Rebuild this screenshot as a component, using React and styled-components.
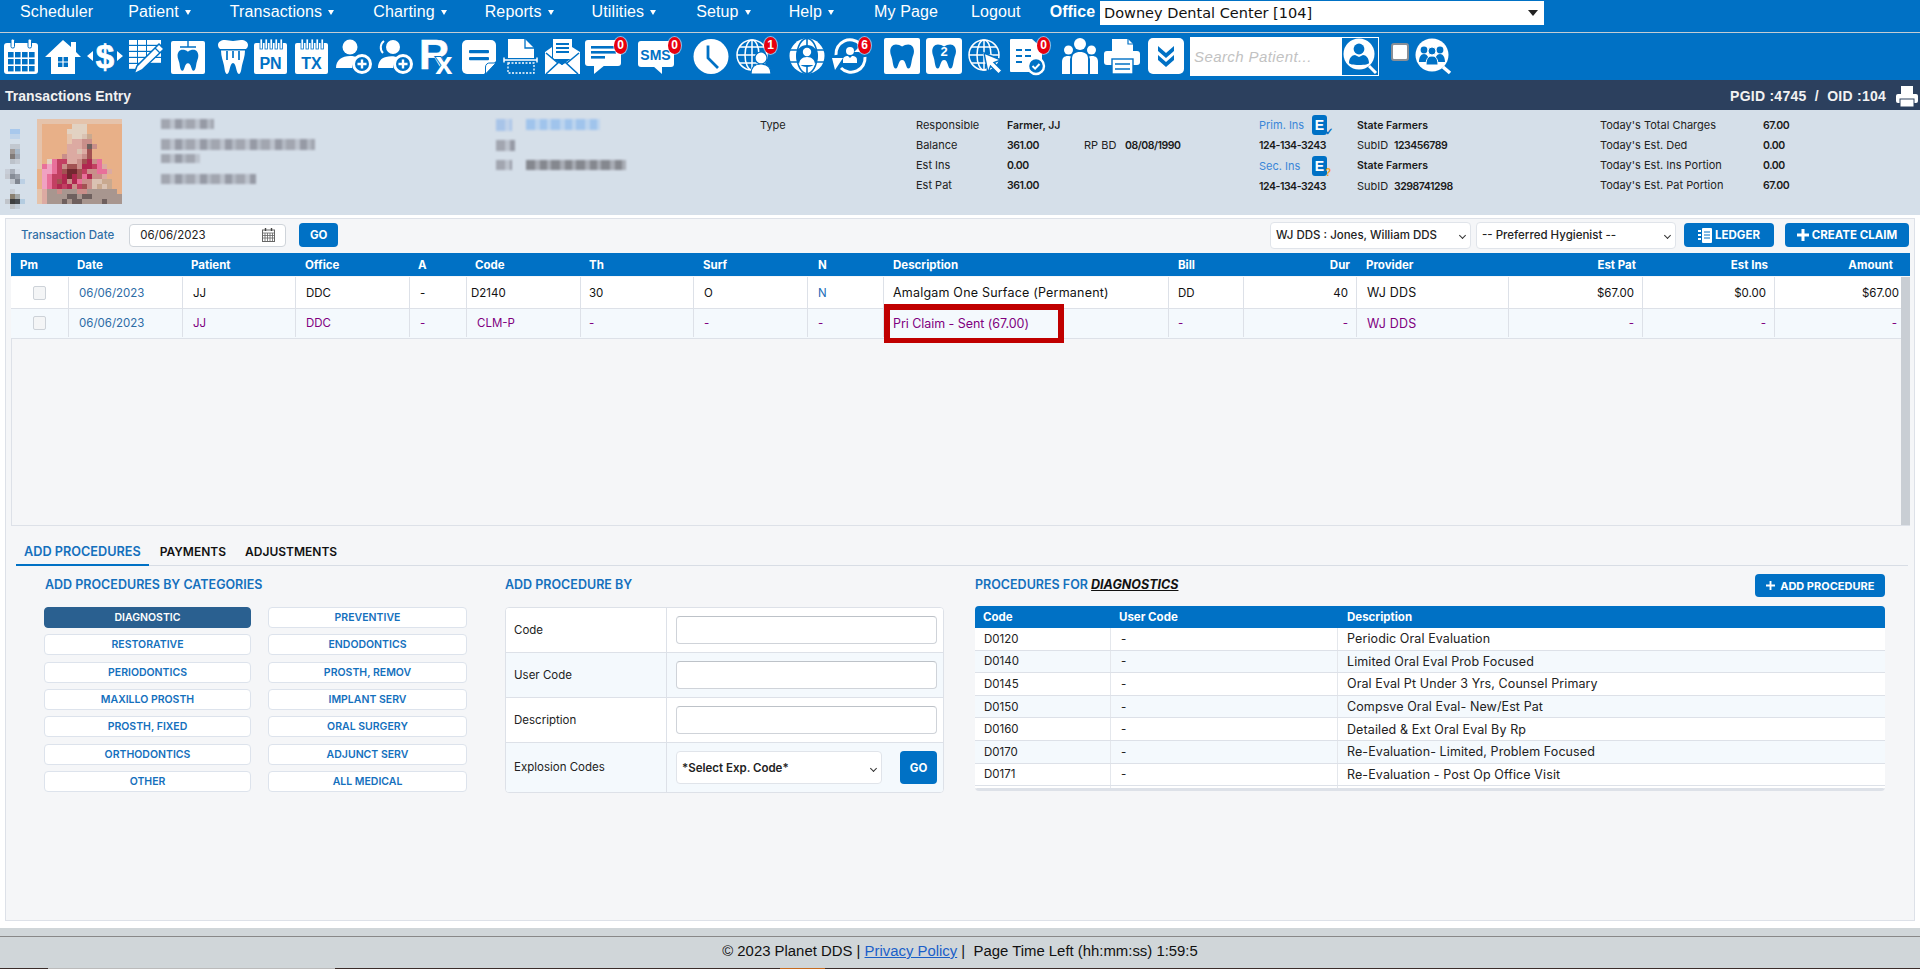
import React from 'react';
import styled, { createGlobalStyle } from 'styled-components';

const BLUE = '#0071c5';
const BODY = '"Inter", "Noto Sans", sans-serif';
const ARIAL = '"Liberation Sans", Arial, sans-serif';

const Global = createGlobalStyle`
  html, body { margin: 0; padding: 0; background: #fff; }
  body { font-family: ${BODY}; font-size: 12px; color: #111; overflow: hidden; }
  * { box-sizing: border-box; }
`;

const Page = styled.div`
  width: 1920px; height: 969px; display: flex; flex-direction: column; overflow: hidden;
`;
const TopNav = styled.nav`
  height: 33px; background: ${BLUE}; border-bottom: 1px solid #c4ccd4; display: flex; align-items: flex-start;
  padding-left: 20px; font-family: ${ARIAL}; font-size: 16px; color: #fff;
`;
const NavItem = styled.div`
  display: flex; align-items: center; height: 24px; margin-right: ${p => p.$mr}px; white-space: nowrap; letter-spacing: .12px;
`;
const Caret = styled.span`
  display: inline-block; margin-left: 6px; width: 0; height: 0; margin-top: 1px;
  border-left: 3.5px solid transparent; border-right: 3.5px solid transparent; border-top: 5px solid #fff;
`;
const OfficeLabel = styled.div`
  font-weight: 700; height: 24px; display: flex; align-items: center; margin-right: 5px;
`;
const OfficeSelect = styled.div`
  margin-top: 1px; width: 444px; height: 24px; background: #fff; color: #111; display: flex; align-items: center; justify-content: space-between;
  padding: 0 6px 0 4px; font-family: "DejaVu Sans", sans-serif; font-size: 14.5px;
`;
const DownTri = styled.span`
  width: 0; height: 0; border-left: 5px solid transparent; border-right: 5px solid transparent; border-top: 6px solid #222;
`;

const Toolbar = styled.div`
  height: 47px; background: ${BLUE}; display: flex; align-items: flex-start; padding: 5px 0 0 3px; position: relative;
`;
const Slot = styled.div`
  width: ${p => p.$w}px; height: 36px; flex: none; position: relative;
`;
const Badge = styled.span`
  position: absolute; left: ${p => p.$l}px; top: -1px; width: 13px; height: 17px; border-radius: 50%;
  background: #e8000f; color: #fff; font: 700 12px/17px ${ARIAL}; text-align: center; box-shadow: 0 0 0 1px rgba(255,255,255,.55);
`;
const SearchBox = styled.div`
  width: 189px; height: 39px; margin-top: -1px; background: #fff; display: flex; flex: none; align-items: stretch; justify-content: space-between;
  border: 1px solid #fff;
`;
const SearchInput = styled.input`
  width: 150px; border: 0; outline: 0; padding: 0 0 0 3px; background: transparent; font: italic 15px ${ARIAL}; letter-spacing: .4px;
  &::placeholder { color: #c2c2c2; opacity: 1; }
`;
const SearchBtn = styled.div`
  width: 36px; background: ${BLUE}; display: flex;
`;
const ToolCheck = styled.span`
  width: 18px; height: 18px; margin: 5px 6px 0 12px; flex: none; background: #fff; border: 2px solid #8a8f96; border-radius: 3px;
`;

const TitleBar = styled.div`
  height: 30px; background: #2c405e; color: #f2f2f2; display: flex; align-items: center; justify-content: space-between;
  padding: 2px 2px 0 5px; font: 700 14px ${ARIAL};
`;
const TitleRight = styled.div`
  display: flex; align-items: center; gap: 10px; letter-spacing: .25px;
`;

const Band = styled.div`
  height: 105px; background: #d5dfe9; display: flex; padding: 5px 0 0 0; flex: none;
`;
const BandCol = styled.div`
  width: ${p => p.$w}px; flex: none; display: flex; flex-direction: column; font-size: 11px; color: #1a1a1a; position: relative; padding-top: ${p => p.$pt || 0}px;
`;
const BandRow = styled.div`
  height: ${p => p.$h || 20}px; display: flex; align-items: center; white-space: nowrap;
`;
const BKey = styled.span`
  width: ${p => p.$w ? p.$w + 'px' : 'auto'}; flex: none; color: ${p => p.$blue ? '#3a86d8' : '#222'};
`;
const BVal = styled.span`
  font-weight: 600; width: ${p => p.$w ? p.$w + 'px' : 'auto'}; flex: none; font-size: 10.5px; letter-spacing: ${p => p.$num ? '-.45px' : '0'};
`;
const Smudge = styled.div`
  width: ${p => p.$w}px; height: ${p => p.$h}px; margin: ${p => p.$m || '0'}; flex: none; filter: blur(1.3px);
  background: repeating-linear-gradient(90deg, ${p => p.$c || '#a2a6b0'} 0 9px, ${p => p.$d || '#bcc2cc'} 9px 14px, ${p => p.$c || '#969aa5'} 14px 21px, ${p => p.$d || '#b4bac4'} 21px 25px);
`;
const SmudgeRow = styled.div`
  display: flex; gap: 14px; margin-bottom: ${p => p.$mb}px;
`;
const EIcon = styled.span`
  position: relative; width: 15px; height: 20px; border-radius: 3px; background: ${BLUE}; color: #fff; font: 700 14px/20px ${ARIAL}; text-align: center; flex: none;
`;
const EMark = styled.span`
  position: absolute; left: 13px; bottom: -2px; font: 700 10px/10px ${ARIAL}; color: ${p => p.$c};
`;
const EGap = styled.span`width: 30px; flex: none;`;

const Main = styled.div`
  flex: 1; padding: 3px 5px 7px 5px; min-height: 0;
`;
const Panel = styled.div`
  height: 703px; background: #f5f6f8; border: 1px solid #dde1e8; position: relative; padding-left: 5px;
`;
const PanelBar = styled.div`
  height: 34px; display: flex; align-items: center; padding: 0 5px 2px 10px; margin-right: 0;
`;
const DateLabel = styled.span`
  color: #2f6ea5; font-size: 11.5px; font-weight: 500; margin-right: 15px;
`;
const DateBox = styled.div`
  width: 157px; height: 23px; border: 1px solid #cfd4da; border-radius: 4px; background: #fff; display: flex; align-items: center;
  justify-content: space-between; padding: 0 10px; font-size: 11.5px; color: #222; margin-right: 13px;
`;
const Btn = styled.div`
  height: ${p => p.$h || 24}px; width: ${p => p.$w}px; background: ${BLUE}; color: #fff; border-radius: 4px; display: flex; align-items: center; justify-content: center;
  gap: 3px; font-size: ${p => p.$fs || 11.5}px; font-weight: 700; flex: none; white-space: nowrap; margin: ${p => p.$m || 0};
`;
const Spacer = styled.div`flex: 1;`;
const SelectBox = styled.div`
  width: ${p => p.$w}px; height: ${p => p.$h || 27}px; border: 1px solid #e0e4ea; border-radius: 4px; background: #fff; display: flex; align-items: center; justify-content: space-between;
  padding: 0 5px; font-size: 11.5px; font-weight: ${p => p.$fw || 500}; color: #222; margin-right: ${p => p.$mr || 0}px; white-space: nowrap; flex: none;
`;
const Chev = styled.span`
  width: 5px; height: 5px; border-right: 1px solid #333; border-bottom: 1px solid #333; transform: rotate(45deg); margin-top: 1px; flex: none;
`;

const cols = '58px 114px 113px 114px 57px 114px 113px 114px 76px 285px 75px 113px 152px 134px 132px 125px';
const TableWrap = styled.div`
  width: 1899px; position: relative;
`;
const THead = styled.div`
  height: 23px; background: ${BLUE}; color: #fff; display: grid; grid-template-columns: ${cols} 10px; font-size: 11.5px; font-weight: 700;
`;
const TH = styled.div`
  display: flex; align-items: center; padding: ${p => p.$r ? '0 7px 0 0' : `0 0 0 ${p.$pl ?? 8}px`}; justify-content: ${p => p.$r ? 'flex-end' : 'flex-start'};
`;
const TBodyWrap = styled.div`
  height: 250px; display: flex; border-left: 1px solid #dde1e8; border-bottom: 1px solid #dde1e8; padding-top: 1px;
`;
const TBody = styled.div`
  flex: 1; min-width: 0;
`;
const ScrollBar = styled.div`
  width: 9px; background: #c9ced4; flex: none;
`;
const TRow = styled.div`
  height: ${p => p.$h}px; display: grid; grid-template-columns: ${cols}; background: ${p => p.$alt ? '#f4f9fd' : '#fff'};
  border-bottom: 1px solid #dde1e8; color: ${p => p.$alt ? '#800080' : '#111'}; font-size: 11.5px; margin-left: -1px;
  padding-bottom: ${p => p.$alt ? 1 : 0}px;
`;
const TD = styled.div`
  display: flex; align-items: center; border-right: 1px solid #dde1e8; white-space: nowrap;
  padding: ${p => p.$c ? '0' : p.$r ? `0 ${p.$pr ?? 8}px 0 0` : `0 0 0 ${p.$pl ?? 10}px`};
  justify-content: ${p => p.$c ? 'center' : p.$r ? 'flex-end' : 'flex-start'};
  color: ${p => p.$color || 'inherit'};
  font-size: ${p => p.$wide ? '12.5px' : 'inherit'}; letter-spacing: ${p => p.$ls ?? (p.$wide ? .2 : 0)}px;
  &:last-child { border-right: 0; }
`;
const RowCheck = styled.span`
  width: 13px; height: 14px; border: 1px solid #cdd2d8; border-radius: 2px; background: #f4f5f6;
`;
const RedBox = styled.div`
  position: absolute; left: 873px; top: 51px; width: 180px; height: 39px; border: 6px solid #c00000; border-bottom-width: 5px; pointer-events: none;
`;

const TabBar = styled.div`
  margin: 14px 6px 0 5px; height: 26px; display: flex; gap: 3px; border-bottom: 1px solid #d8dde5;
`;
const Tab = styled.div`
  padding: 0 8px; height: 26px; line-height: 24px; font-size: ${p => p.$on ? 12.7 : 12}px; font-weight: 600; white-space: nowrap;
  color: ${p => p.$on ? '#1470bd' : '#111'}; border-bottom: ${p => p.$on ? `2px solid ${BLUE}` : '0'};
`;
const Lower = styled.div`
  display: flex; padding: 0 0 0 33px;
`;
const CatCol = styled.div`width: 423px; margin-right: 38px; flex: none;`;
const FormCol = styled.div`width: 439px; margin-right: 31px; flex: none;`;
const ProcCol = styled.div`width: 910px; flex: none;`;
const SecHead = styled.div`
  height: 40px; padding: 10px 0 0 ${p => p.$pl || 0}px; display: flex; align-items: flex-start; justify-content: space-between; color: #1470bd; font-size: 12.5px; font-weight: 600; line-height: 18px; white-space: nowrap;
`;
const Diag = styled.span`
  color: #111; font-weight: 700; font-style: italic; text-decoration: underline; margin-left: 0;
`;
const CatGrid = styled.div`
  display: grid; grid-template-columns: 207px 199px; column-gap: 17px; grid-auto-rows: 21px; row-gap: 6.33px; margin-top: 1px;
`;
const CatBtn = styled.div`
  border: 1px solid ${p => p.$on ? '#2a6090' : '#dde3ec'}; border-radius: 4px; background: ${p => p.$on ? '#2a6090' : '#fff'}; color: ${p => p.$on ? '#fff' : '#1470bd'};
  display: flex; align-items: center; justify-content: center; font-size: 10.5px; font-weight: 600; white-space: nowrap;
`;
const FormTable = styled.div`
  border: 1px solid #dde1e8; border-radius: 4px; background: #fff; overflow: hidden; margin-top: 1px;
`;
const FormRow = styled.div`
  height: ${p => p.$h || 45}px; display: grid; grid-template-columns: 161px 1fr; background: ${p => p.$alt ? '#f4f9fd' : '#fff'};
  border-bottom: ${p => p.$last ? 0 : '1px solid #dde1e8'};
`;
const FormLabel = styled.div`
  display: flex; align-items: center; padding: 0 0 1px 8px; border-right: 1px solid #dde1e8; font-size: 11.5px; color: #222;
`;
const FormCell = styled.div`
  display: flex; align-items: center; padding: 0 6px 0 9px; justify-content: space-between;
`;
const TextInput = styled.div`
  width: 100%; height: 28px; background: #fff; border: 1px solid #cfd3d9; border-top-color: #bdc2c8; border-radius: 4px;
`;
const ProcTable = styled.div`
  border-bottom: 2px solid #dde1e8; border-radius: 4px; overflow: hidden;
`;
const ProcHead = styled.div`
  height: 22px; background: ${BLUE}; color: #fff; font-size: 11.5px; font-weight: 700; display: grid; grid-template-columns: 136px 227px 1fr; align-items: center; padding-top: 0;
`;
const ProcHeadCell = styled.div`padding-left: ${p => p.$pl}px;`;
const ProcRow = styled.div`
  height: ${p => p.$h || 22.6}px; display: grid; grid-template-columns: 136px 227px 1fr; background: ${p => p.$alt ? '#f4f9fd' : '#fff'};
  border-bottom: 1px solid #dde1e8; font-size: 11.5px; color: #222;
`;
const ProcCell = styled.div`
  display: flex; align-items: center; padding-left: ${p => p.$pl}px; border-right: 1px solid #e4e7ec;
  font-size: ${p => p.$wide ? '12.5px' : 'inherit'}; letter-spacing: ${p => p.$wide ? '.1px' : '0'};
  &:last-child { border-right: 0; }
`;

const Footer = styled.footer`
  height: 40px; flex: none; background: #d0d6d9; padding-top: 8px;
`;
const FooterLine = styled.div`
  height: 23px; border-top: 1.5px solid #888; display: flex; align-items: flex-end; justify-content: center; font: 14.9px ${ARIAL}; color: #111; white-space: pre;
`;
const PrivacyLink = styled.a`
  color: #1a5fc8; text-decoration: underline;
`;
const BottomStrip = styled.div`
  height: 1px; flex: none; background: linear-gradient(90deg, #3b2d2a 0 48px, #bbb 48px 335px, #3b2d2a 335px 780px, #c46a20 780px 825px, #3b2d2a 825px);
`;
const IconSvg = styled.svg`
  overflow: visible; display: block;
`;

/* ---------- toolbar icons ---------- */
const Svg = ({ children, size = 36, vb = 36 }) => (
  <IconSvg width={size} height={size} viewBox={`0 0 ${vb} ${vb}`} fill="#fff" xmlns="http://www.w3.org/2000/svg">{children}</IconSvg>
);
const TOOTH = 'M18 8c-2-1.4-4-2.2-6.5-2.2C7.600 5.800 5.500 9 5.500 13c0 3 1.200 5 2 8 .8 3 1 10 3.800 10 3 0 2.400-9 6.700-9s3.700 9 6.700 9c2.800 0 3-7 3.800-10 .8-3 2-5 2-8 0-4-2.100-7.200-6-7.200C22 5.800 20 6.600 18 8z';

const IconCalendar = () => (
  <Svg>
    <rect x="1" y="5" width="34" height="31" rx="3" />
    {[5, 12, 19, 26].flatMap(x => [14, 21, 28].map(y => <rect key={x + '-' + y} x={x} y={y} width="5.600" height="5.400" fill={BLUE} />))}
    {[8, 25].map(x => <rect key={x} x={x} y="1" width="3.500" height="9" rx="1.500" stroke={BLUE} strokeWidth="1" />)}
  </Svg>
);
const IconHome = () => (
  <Svg>
    <path d="M18 2 L26 9 V4 H31 V14 L36 19 H30 V36 H6 V19 H0 Z" />
    <rect x="13" y="19" width="10" height="10" fill={BLUE} />
    <path d="M18 19v10M13 24h10" stroke="#fff" strokeWidth="1.200" />
  </Svg>
);
const IconDollar = () => (
  <Svg>
    <text x="18" y="30" textAnchor="middle" fontFamily="Liberation Sans" fontWeight="700" fontSize="33" stroke="#fff" strokeWidth=".7">$</text>
    <path d="M0 18l6-5v10zM36 18l-6-5v10z" />
  </Svg>
);
const IconGridPen = () => (
  <Svg>
    {[2, 8, 14, 20].flatMap(y => [1, 10, 19].map(x => (
      <rect key={x + '-' + y} x={x} y={y} width={x === 19 ? 14 : 8} height="4.800" />
    )))}
    <rect x="1" y="26" width="8" height="4.800" />
    <path d="M31 6 L36 11 L14 32 L6 36 L9 28 Z" stroke={BLUE} strokeWidth="1.500" />
    <path d="M27 10l5 5" stroke={BLUE} strokeWidth="1.200" />
  </Svg>
);
const IconToothSquare = () => (
  <Svg>
    <rect x="1" y="3" width="34" height="33" rx="2" />
    <path d="M10 9h16M18 3v6" stroke={BLUE} strokeWidth="1.400" />
    <path transform="translate(3 7) scale(.83)" d={TOOTH} fill={BLUE} />
  </Svg>
);
const IconCrown = () => (
  <Svg>
    <path d="M3 7c0-3 3-5 7-5 3 0 5 1 8 1s5-1 8-1c4 0 7 2 7 5 0 2-1 3-2 4H5C4 10 3 9 3 7z" />
    <path d="M6 12.500h24c0 6-2 10-3 15-.6 3-1 8.500-3 8.500-3 0-2.500-11-6-11s-3 11-6 11c-2 0-2.400-5.500-3-8.500-1-5-3-9-3-15z" />
    <path d="M12 13v9M18 13v7M24 13v9" stroke={BLUE} strokeWidth="1.700" />
  </Svg>
);
const PadIcon = ({ label }) => (
  <Svg>
    <rect x="1" y="5" width="33" height="31" rx="2" />
    {[7, 12, 17, 22, 27].map(x => <rect key={x} x={x} y="1" width="2.400" height="10" stroke={BLUE} strokeWidth=".8" />)}
    <text x="17.500" y="31" textAnchor="middle" fontFamily="Liberation Sans" fontWeight="700" fontSize="16" fill={BLUE}>{label}</text>
  </Svg>
);
const PlusBadge = () => (
  <g>
    <circle cx="26" cy="26" r="8.500" fill={BLUE} stroke="#fff" strokeWidth="3" />
    <path d="M26 21.500v9M21.500 26h9" stroke="#fff" strokeWidth="2.400" />
  </g>
);
const IconUserPlus = () => (
  <Svg>
    <circle cx="14" cy="9" r="7.500" />
    <path d="M0 30c0-8 6-12 14-12 3 0 6 .6 8 2-4 2-6 5.500-6 10z" />
    <PlusBadge />
  </Svg>
);
const IconUsersPlus = () => (
  <Svg>
    <circle cx="16" cy="9" r="7" />
    <path d="M7 3a8 8 0 0 0-1 12" stroke="#fff" strokeWidth="2" fill="none" />
    <path d="M1 30c0-6 3-10 8-11 4-1 9-1 13 1-4 2-6 5.500-6 10z" />
    <PlusBadge />
  </Svg>
);
const IconRx = () => (
  <Svg>
    <text x="-1" y="31" fontFamily="Liberation Sans" fontWeight="700" fontSize="42" stroke="#fff" strokeWidth=".5">
      R<tspan dx="-14" dy="5" fontSize="31" stroke={BLUE} strokeWidth="2" paintOrder="stroke">x</tspan>
    </text>
  </Svg>
);
const IconNote = () => (
  <Svg>
    <path d="M6 2h24a5 5 0 0 1 5 5v16L23 36H6a5 5 0 0 1-5-5V7a5 5 0 0 1 5-5z" />
    <rect x="8" y="12" width="20" height="3.200" rx="1" fill={BLUE} />
    <rect x="8" y="19" width="20" height="3.200" rx="1" fill={BLUE} />
    <path d="M24.500 36l10.500-11h-6a4 4 0 0 0-4.500 4z" stroke={BLUE} strokeWidth="1" />
  </Svg>
);
const IconDocScan = () => (
  <Svg>
    <path d="M5 1h17l9 9v10H5z" />
    <path d="M22 1v9h9" stroke={BLUE} strokeWidth="1.300" fill="none" />
    <path d="M1 22h33M1 19.500v5M34 19.500v5" stroke="#fff" strokeWidth="1.500" />
    <rect x="5" y="25" width="26" height="10" fill="none" stroke="#fff" strokeWidth="1.300" strokeDasharray="2 1.500" />
  </Svg>
);
const IconEnvelope = () => (
  <Svg>
    <rect x="9" y="1" width="19" height="20" />
    <path d="M12 6h13M12 10h13M12 14h13" stroke={BLUE} strokeWidth="1.800" />
    <path d="M1 14l7-5v11l10 7 10-7V9l8 5v22H1z" />
    <path d="M2 15l12 10M35 15L23 25M2 36l13-12 3 2 3-2 13 12" stroke={BLUE} strokeWidth="1.600" fill="none" />
  </Svg>
);
const IconChat = () => (
  <Svg>
    <rect x="0" y="2" width="36" height="26" rx="3" />
    <path d="M9 27v9l11-9z" />
    <rect x="6" y="8" width="25" height="2.600" fill={BLUE} />
    <rect x="6" y="13" width="25" height="2.600" fill={BLUE} />
    <rect x="6" y="18" width="14" height="2.600" fill={BLUE} />
  </Svg>
);
const IconSms = () => (
  <Svg>
    <rect x="0" y="3" width="36" height="26" rx="3" />
    <path d="M24 28v8l-9-8z" />
    <text x="17.500" y="22" textAnchor="middle" fontFamily="Liberation Sans" fontWeight="700" fontSize="14" fill={BLUE}>SMS</text>
  </Svg>
);
const IconClock = () => (
  <Svg>
    <circle cx="18" cy="18.500" r="17.500" />
    <path d="M15 7.500V20L25 30" stroke={BLUE} strokeWidth="2.800" fill="none" />
  </Svg>
);
const GlobeLines = ({ sw = 1.500 }) => (
  <g fill="none" stroke="#fff" strokeWidth={sw}>
    <circle cx="17" cy="17" r="15" />
    <ellipse cx="17" cy="17" rx="7" ry="15" />
    <path d="M17 2v30M2 17h30M4 9h26M4 25h26" />
  </g>
);
const IconGlobeUser = () => (
  <Svg>
    <GlobeLines />
    <circle cx="26" cy="20" r="6" stroke={BLUE} strokeWidth="1.200" />
    <path d="M16 36c0-7 4-10 10-10s10 3 10 10z" stroke={BLUE} strokeWidth="1.200" />
  </Svg>
);
const IconGlobePerson = () => (
  <Svg>
    <circle cx="18" cy="18" r="17.500" />
    <ellipse cx="18" cy="18" rx="10" ry="17.500" fill="none" stroke={BLUE} strokeWidth="1.600" />
    <path d="M1 12h34M1 24h34M18 0v36" stroke={BLUE} strokeWidth="1.600" />
    <circle cx="18" cy="18" r="11" fill={BLUE} />
    <circle cx="18" cy="14" r="4.200" />
    <path d="M10 27c0-5 3-8 8-8s8 3 8 8z" />
  </Svg>
);
const IconRefresh = () => (
  <Svg>
    <path d="M4 17A14 14 0 0 1 28 6" fill="none" stroke="#fff" strokeWidth="3" />
    <path d="M33 19a14 14 0 0 1-24 11" fill="none" stroke="#fff" strokeWidth="3" />
    <path d="M33 3v11H22zM0 20h11L3 32z" />
    <circle cx="18" cy="13" r="4" />
    <path d="M11 25v-3c0-3 2-4 5-4l2 2 2-2c3 0 5 1 5 4v3z" />
  </Svg>
);
const IconTooth = () => (
  <Svg>
    <rect x="0" y="0" width="36" height="36" rx="2" />
    <path transform="translate(1 1) scale(.95)" d={TOOTH} fill={BLUE} />
  </Svg>
);
const IconTooth2 = () => (
  <Svg>
    <rect x="0" y="0" width="36" height="36" rx="3" />
    <path transform="translate(1 1) scale(.95)" d={TOOTH} fill={BLUE} />
    <text x="18" y="18" textAnchor="middle" fontFamily="Liberation Sans" fontWeight="700" fontSize="13">2</text>
  </Svg>
);
const IconGlobeCursor = () => (
  <Svg>
    <GlobeLines />
    <path d="M17 15l17 7-7 2.500 8 8-3.500 3.500-8-8-2.500 7z" stroke={BLUE} strokeWidth="1.400" />
  </Svg>
);
const IconDocCheck = () => (
  <Svg>
    <path d="M2 1h21l10 9v24H2a1 1 0 0 1-1-1V2a1 1 0 0 1 1-1z" />
    <path d="M7 12h6M16 12h6M7 18h6M16 18h6M7 24h6" stroke={BLUE} strokeWidth="1.800" />
    <circle cx="27" cy="28" r="8" fill={BLUE} stroke="#fff" strokeWidth="2.400" />
    <path d="M23.500 28l2.600 2.600 4.400-4.600" stroke="#fff" strokeWidth="2" fill="none" />
  </Svg>
);
const IconPeople = () => (
  <Svg>
    <circle cx="18" cy="6" r="6" />
    <circle cx="6.500" cy="12" r="4.500" />
    <circle cx="29.500" cy="12" r="4.500" />
    <path d="M10 36V21c0-5 3-7 8-7s8 2 8 7v15z" />
    <path d="M0 36V24c0-4 2-6 6-6 1.500 0 2.500.3 3 .6-.6 1-1 2-1 3V36zM36 36V24c0-4-2-6-6-6-1.500 0-2.500.3-3 .6.6 1 1 2 1 3V36z" />
  </Svg>
);
const IconPrinter = () => (
  <Svg>
    <path d="M8 1h16l5 5v8H8z" />
    <path d="M24 1v5h5" stroke={BLUE} strokeWidth="1.200" fill="none" />
    <rect x="0" y="13" width="36" height="14" rx="3" />
    <rect x="8" y="21" width="21" height="15" stroke={BLUE} strokeWidth="1.400" />
    <path d="M11 26h15M11 31h15" stroke={BLUE} strokeWidth="1.600" />
  </Svg>
);
const IconChevrons = () => (
  <Svg>
    <rect x="0" y="0" width="36" height="36" rx="5" />
    <path d="M10 8l8 7 8-7v5l-8 7-8-7zM10 17l8 7 8-7v5l-8 7-8-7z" fill={BLUE} />
  </Svg>
);
const IconUserSearch = () => (
  <Svg>
    <circle cx="17" cy="16" r="15.500" />
    <path d="M27 28l7 7" stroke="#fff" strokeWidth="3" />
    <circle cx="17" cy="11" r="5.400" fill={BLUE} />
    <path d="M7 25c0-5 3-8 6-8l4 2 4-2c3 0 6 3 6 8 0 1-4 2-10 2s-10-1-10-2z" fill={BLUE} />
  </Svg>
);
const IconGroupSearch = () => (
  <Svg>
    <circle cx="17" cy="17" r="16.500" />
    <path d="M28 29l7 6" stroke="#fff" strokeWidth="3.500" />
    {[[9, 12], [25, 12]].map(([x, y]) => <circle key={x} cx={x} cy={y} r="3.400" fill={BLUE} />)}
    <circle cx="17" cy="13" r="4" fill={BLUE} stroke="#fff" strokeWidth="1" />
    <path d="M4 24c0-5 2-8 5-8s5 3 5 8zM20 24c0-5 2-8 5-8s5 3 5 8z" fill={BLUE} />
    <path d="M11 27c0-6 2-9 6-9s6 3 6 9z" fill={BLUE} stroke="#fff" strokeWidth="1" />
  </Svg>
);

const toolItems = [
  { I: IconCalendar, w: 42 }, { I: IconHome, w: 42 }, { I: IconDollar, w: 41 }, { I: IconGridPen, w: 42 },
  { I: IconToothSquare, w: 45 }, { I: IconCrown, w: 38 }, { I: () => <PadIcon label="PN" />, w: 41 }, { I: () => <PadIcon label="TX" />, w: 42 },
  { I: IconUserPlus, w: 41 }, { I: IconUsersPlus, w: 43 }, { I: IconRx, w: 41 }, { I: IconNote, w: 42 },
  { I: IconDocScan, w: 41 }, { I: IconEnvelope, w: 41 }, { I: IconChat, w: 53, badge: '0', l: 29 }, { I: IconSms, w: 55, badge: '0', l: 30 },
  { I: IconClock, w: 42 }, { I: IconGlobeUser, w: 54, badge: '1', l: 29 }, { I: IconGlobePerson, w: 43 }, { I: IconRefresh, w: 52, badge: '6', l: 26 },
  { I: IconTooth, w: 42 }, { I: IconTooth2, w: 41 }, { I: IconGlobeCursor, w: 42 }, { I: IconDocCheck, w: 53, badge: '0', l: 28 },
  { I: IconPeople, w: 42 }, { I: IconPrinter, w: 44 }, { I: IconChevrons, w: 42 },
];

const PHOTO = [
  'bbbbbbbbbbbbbbbbb',
  'baaaaaacccaaaaaaa',
  'baaaaaccccaaaaaaa',
  'baaaaabccnoaaaaaa',
  'baaaaabddeeaaaaaa',
  'baaaaadddekeaaaaa',
  'baaaaaddndfaaaaaa',
  'baaaaedddefaaaaaa',
  'bachllddefgehaaaa',
  'bhihleffegglhdaaa',
  'aiihlfmmfleehhdaa',
  'aihllgmgfhgeedaaa',
  'aihlfgegheennooaa',
  'aihlglgelfenonoaa',
  'bdjjejjjeejjjjjja',
  'bdjjjjkkjkkjjjjjj',
  'bdjjjkjkkjjjjkjjj',
];
const PAL = { a: '#e8b088', b: '#e5c3ab', c: '#e2d2c2', d: '#dcaaa2', e: '#c98f8a', f: '#a25252', g: '#b02850', h: '#e8709a', i: '#f0a2c2', j: '#a8968f', k: '#6f605e', l: '#c24062', m: '#722830', n: '#dac2b2', o: '#c9a98f' };
const Photo = () => (
  <svg width="85" height="85" viewBox="0 0 17 17" shapeRendering="crispEdges">
    {PHOTO.flatMap((row, y) => row.split('').map((c, x) => <rect key={x + '-' + y} x={x} y={y} width="1.02" height="1.02" fill={PAL[c]} />))}
  </svg>
);
const SIDE = [
  [2, 2, '#a8c8ec'], [3, 2, '#a8c8ec'], [2, 3, '#c0d4ea'], [3, 3, '#c0d4ea'],
  [2, 5, '#c2c8d0'], [3, 5, '#c2c8d0'], [2, 6, '#a09a98'], [3, 6, '#a8b8c8'], [2, 7, '#807a78'], [3, 7, '#a0a8b4'], [2, 8, '#bcc2ca'], [3, 8, '#c6ccd4'],
  [1, 10, '#c8ced8'], [2, 10, '#a8aeb8'], [3, 10, '#d0d8e2'], [1, 11, '#c4c8d0'], [2, 11, '#868c96'], [3, 11, '#9aa0aa'], [2, 12, '#c0c6ce'], [3, 12, '#808690'], [4, 12, '#bcd0e4'],
  [2, 14, '#c8ced6'], [2, 15, '#8a8070'], [3, 15, '#a4a8a8'], [1, 16, '#c0c4ca'], [2, 16, '#3e3e3e'], [3, 16, '#484c50'], [4, 16, '#b4cce0'], [2, 17, '#bcc0c4'], [3, 17, '#c2ccd6'],
];
const SideMosaic = () => (
  <svg width="30" height="95" viewBox="0 0 6 19" shapeRendering="crispEdges">
    {SIDE.map(([x, y, f]) => <rect key={x + '-' + y} x={x} y={y} width="1" height="1" fill={f} />)}
  </svg>
);

const SmallCal = () => (
  <svg width="13" height="14" viewBox="0 0 13 14"><rect x=".5" y="2" width="12" height="11.500" fill="none" stroke="#666" /><path d="M.5 5h12M3 5v8M5.500 5v8M8 5v8M10.500 5v8M.5 7.500h12M.5 10h12" stroke="#666" strokeWidth=".8" /><path d="M3.500 0v3M9.500 0v3" stroke="#444" strokeWidth="1.400" /></svg>
);
const LedgerIcon = () => (
  <svg width="14" height="15" viewBox="0 0 14 15" fill="#fff"><rect x="4" y="0" width="10" height="15" rx="1" /><rect x="0" y="2" width="3" height="2" /><rect x="0" y="6" width="3" height="2" /><rect x="0" y="10" width="3" height="2" /><path d="M6 4h6M6 7h6M6 10h6" stroke={BLUE} /></svg>
);
const PlusIcon = ({ s = 12, sw = 3 }) => (
  <svg width={s} height={s} viewBox="0 0 12 12"><path d="M6 0v12M0 6h12" stroke="#fff" strokeWidth={sw} /></svg>
);
const TinyPrinter = () => (
  <svg width="22" height="21" viewBox="0 0 22 21" fill="#fff"><rect x="5" y="0" width="12" height="8" /><rect x="0" y="8" width="22" height="9" rx="2" /><rect x="4" y="13" width="14" height="8" stroke="#2c405e" strokeWidth="1" /></svg>
);

const navItems = [
  ['Scheduler', 0, 35], ['Patient', 1, 39], ['Transactions', 1, 39], ['Charting', 1, 38], ['Reports', 1, 38],
  ['Utilities', 1, 40], ['Setup', 1, 38], ['Help', 1, 40], ['My Page', 0, 33], ['Logout', 0, 29],
];
const heads = [['Pm', 0, 9], ['Date', 0, 8], ['Patient', 0, 8], ['Office', 0, 9], ['A', 0, 8], ['Code', 0, 8], ['Th', 0, 8], ['Surf', 0, 9], ['N', 0, 10], ['Description', 0, 9], ['Bill', 0, 9], ['Dur', 1], ['Provider', 0, 9], ['Est Pat', 1], ['Est Ins', 1], ['Amount', 1]];
const cats = ['DIAGNOSTIC', 'PREVENTIVE', 'RESTORATIVE', 'ENDODONTICS', 'PERIODONTICS', 'PROSTH, REMOV', 'MAXILLO PROSTH', 'IMPLANT SERV', 'PROSTH, FIXED', 'ORAL SURGERY', 'ORTHODONTICS', 'ADJUNCT SERV', 'OTHER', 'ALL MEDICAL'];
const procs = [
  ['D0120', 'Periodic Oral Evaluation'], ['D0140', 'Limited Oral Eval Prob Focused'], ['D0145', 'Oral Eval Pt Under 3 Yrs, Counsel Primary'],
  ['D0150', 'Compsve Oral Eval- New/Est Pat'], ['D0160', 'Detailed & Ext Oral Eval By Rp'], ['D0170', 'Re-Evaluation- Limited, Problem Focused'], ['D0171', 'Re-Evaluation - Post Op Office Visit'],
];

export default function App() {
  return (
    <Page>
      <Global />
      <TopNav>
        {navItems.map(([t, c, mr]) => (
          <NavItem key={t} $mr={mr}>{t}{c ? <Caret /> : null}</NavItem>
        ))}
        <OfficeLabel>Office</OfficeLabel>
        <OfficeSelect>Downey Dental Center [104]<DownTri /></OfficeSelect>
      </TopNav>

      <Toolbar>
        {toolItems.map(({ I, w, badge, l }, i) => (
          <Slot key={i} $w={w}><I />{badge ? <Badge $l={l}>{badge}</Badge> : null}</Slot>
        ))}
        <SearchBox>
          <SearchInput placeholder="Search Patient..." />
          <SearchBtn><IconUserSearch /></SearchBtn>
        </SearchBox>
        <ToolCheck />
        <Slot $w={36}><IconGroupSearch /></Slot>
      </Toolbar>

      <TitleBar>
        <span>Transactions Entry</span>
        <TitleRight><span>PGID :4745&nbsp; /&nbsp; OID :104</span><TinyPrinter /></TitleRight>
      </TitleBar>

      <Band>
        <BandCol $w={37} $pt={4}><SideMosaic /></BandCol>
        <BandCol $w={124} $pt={4}><Photo /></BandCol>
        <BandCol $w={335} $pt={4}>
          <Smudge $w={53} $h={10} />
          <Smudge $w={154} $h={11} $m="10px 0 4px" />
          <Smudge $w={39} $h={9} />
          <Smudge $w={95} $h={10} $m="11px 0 0" />
        </BandCol>
        <BandCol $w={264} $pt={4}>
          <SmudgeRow $mb={9}><Smudge $w={16} $h={12} $c="#a8c4e8" $d="#c0d2ea" /><Smudge $w={74} $h={11} $c="#a0c4ec" $d="#bcd4ee" /></SmudgeRow>
          <SmudgeRow $mb={9}><Smudge $w={19} $h={11} /></SmudgeRow>
          <SmudgeRow $mb={0}><Smudge $w={16} $h={10} /><Smudge $w={100} $h={10} $c="#85888f" $d="#a8acb4" /></SmudgeRow>
        </BandCol>
        <BandCol $w={156}><BandRow><BKey>Type</BKey></BandRow></BandCol>
        <BandCol $w={343}>
          <BandRow><BKey $w={91}>Responsible</BKey><BVal>Farmer, JJ</BVal></BandRow>
          <BandRow><BKey $w={91}>Balance</BKey><BVal $num $w={77}>361.00</BVal><BKey $w={41}>RP BD</BKey><BVal $num>08/08/1990</BVal></BandRow>
          <BandRow><BKey $w={91}>Est Ins</BKey><BVal $num>0.00</BVal></BandRow>
          <BandRow><BKey $w={91}>Est Pat</BKey><BVal $num>361.00</BVal></BandRow>
        </BandCol>
        <BandCol $w={341}>
          <BandRow><BKey $blue $w={53}>Prim. Ins</BKey><EIcon>E<EMark $c="#0a6cc0">✓</EMark></EIcon><EGap /><BVal>State Farmers</BVal></BandRow>
          <BandRow><BVal $num $w={98}>124-134-3243</BVal><BKey $w={37}>SubID</BKey><BVal $num>123456789</BVal></BandRow>
          <BandRow $h={21}><BKey $blue $w={53}>Sec. Ins</BKey><EIcon>E<EMark $c="#f29a1f">?</EMark></EIcon><EGap /><BVal>State Farmers</BVal></BandRow>
          <BandRow><BVal $num $w={98}>124-134-3243</BVal><BKey $w={37}>SubID</BKey><BVal $num>3298741298</BVal></BandRow>
        </BandCol>
        <BandCol $w={320}>
          <BandRow><BKey $w={163}>Today's Total Charges</BKey><BVal $num>67.00</BVal></BandRow>
          <BandRow><BKey $w={163}>Today's Est. Ded</BKey><BVal $num>0.00</BVal></BandRow>
          <BandRow><BKey $w={163}>Today's Est. Ins Portion</BKey><BVal $num>0.00</BVal></BandRow>
          <BandRow><BKey $w={163}>Today's Est. Pat Portion</BKey><BVal $num>67.00</BVal></BandRow>
        </BandCol>
      </Band>

      <Main>
        <Panel>
          <PanelBar>
            <DateLabel>Transaction Date</DateLabel>
            <DateBox>06/06/2023<SmallCal /></DateBox>
            <Btn $w={39}>GO</Btn>
            <Spacer />
            <SelectBox $w={201} $mr={5}>WJ DDS : Jones, William DDS<Chev /></SelectBox>
            <SelectBox $w={200} $mr={8}>-- Preferred Hygienist --<Chev /></SelectBox>
            <Btn $w={90}><LedgerIcon /> LEDGER</Btn>
            <Btn $w={124} $m="0 0 0 11px"><PlusIcon /> CREATE CLAIM</Btn>
          </PanelBar>

          <TableWrap>
            <THead>
              {heads.map(([t, r, pl]) => <TH key={t} $r={r} $pl={pl}>{t}</TH>)}
              <span />
            </THead>
            <TBodyWrap>
              <TBody>
                <TRow $h={32}>
                  <TD $c><RowCheck /></TD>
                  <TD $color="#2d6ca6">06/06/2023</TD><TD>JJ</TD><TD>DDC</TD><TD>-</TD><TD $pl={4}>D2140</TD><TD $pl={8}>30</TD><TD>O</TD>
                  <TD $color="#1a6cb8">N</TD><TD $pl={9} $wide>Amalgam One Surface (Permanent)</TD><TD $pl={9}>DD</TD><TD $r>40</TD><TD $pl={10} $wide>WJ DDS</TD><TD $r>$67.00</TD><TD $r>$0.00</TD><TD $r $pr={1}>$67.00</TD>
                </TRow>
                <TRow $h={30} $alt>
                  <TD $c><RowCheck /></TD>
                  <TD $color="#2d6ca6">06/06/2023</TD><TD>JJ</TD><TD>DDC</TD><TD>-</TD><TD>CLM-P</TD><TD $pl={8}>-</TD><TD>-</TD>
                  <TD>-</TD><TD $pl={9} $wide $ls={-.05}>Pri Claim - Sent (67.00)</TD><TD $pl={9}>-</TD><TD $r>-</TD><TD $pl={10} $wide>WJ DDS</TD><TD $r>-</TD><TD $r>-</TD><TD $r $pr={3}>-</TD>
                </TRow>
              </TBody>
              <ScrollBar />
            </TBodyWrap>
            <RedBox />
          </TableWrap>

          <TabBar>
            <Tab $on>ADD PROCEDURES</Tab>
            <Tab>PAYMENTS</Tab>
            <Tab>ADJUSTMENTS</Tab>
          </TabBar>

          <Lower>
            <CatCol>
              <SecHead $pl={1}>ADD PROCEDURES BY CATEGORIES</SecHead>
              <CatGrid>
                {cats.map((c, i) => <CatBtn key={c} $on={i === 0}>{c}</CatBtn>)}
              </CatGrid>
            </CatCol>
            <FormCol>
              <SecHead>ADD PROCEDURE BY</SecHead>
              <FormTable>
                <FormRow><FormLabel>Code</FormLabel><FormCell><TextInput /></FormCell></FormRow>
                <FormRow $alt><FormLabel>User Code</FormLabel><FormCell><TextInput /></FormCell></FormRow>
                <FormRow><FormLabel>Description</FormLabel><FormCell><TextInput /></FormCell></FormRow>
                <FormRow $alt $last $h={49}>
                  <FormLabel>Explosion Codes</FormLabel>
                  <FormCell>
                    <SelectBox $w={206} $h={33} $fw={600}>*Select Exp. Code*<Chev /></SelectBox>
                    <Btn $w={37} $h={33}>GO</Btn>
                  </FormCell>
                </FormRow>
              </FormTable>
            </FormCol>
            <ProcCol>
              <SecHead>
                <span>PROCEDURES FOR <Diag>DIAGNOSTICS</Diag></span>
                <Btn $w={130} $h={23} $fs={11} $m="-2px 0 0"><PlusIcon s={9} sw={2.500} />&nbsp;ADD PROCEDURE</Btn>
              </SecHead>
              <ProcTable>
                <ProcHead><ProcHeadCell $pl={8}>Code</ProcHeadCell><ProcHeadCell $pl={8}>User Code</ProcHeadCell><ProcHeadCell $pl={9}>Description</ProcHeadCell></ProcHead>
                {procs.map(([c, d], i) => (
                  <ProcRow key={c} $alt={i % 2 === 1}><ProcCell $pl={9}>{c}</ProcCell><ProcCell $pl={10}>-</ProcCell><ProcCell $pl={9} $wide>{d}</ProcCell></ProcRow>
                ))}
                <ProcRow $h={3}><ProcCell $pl={0} /><ProcCell $pl={0} /><ProcCell $pl={0} /></ProcRow>
              </ProcTable>
            </ProcCol>
          </Lower>
        </Panel>
      </Main>

      <Footer>
        <FooterLine>© 2023 Planet DDS | <PrivacyLink href="#">Privacy Policy</PrivacyLink> |  Page Time Left (hh:mm:ss) 1:59:5</FooterLine>
      </Footer>
      <BottomStrip />
    </Page>
  );
}
